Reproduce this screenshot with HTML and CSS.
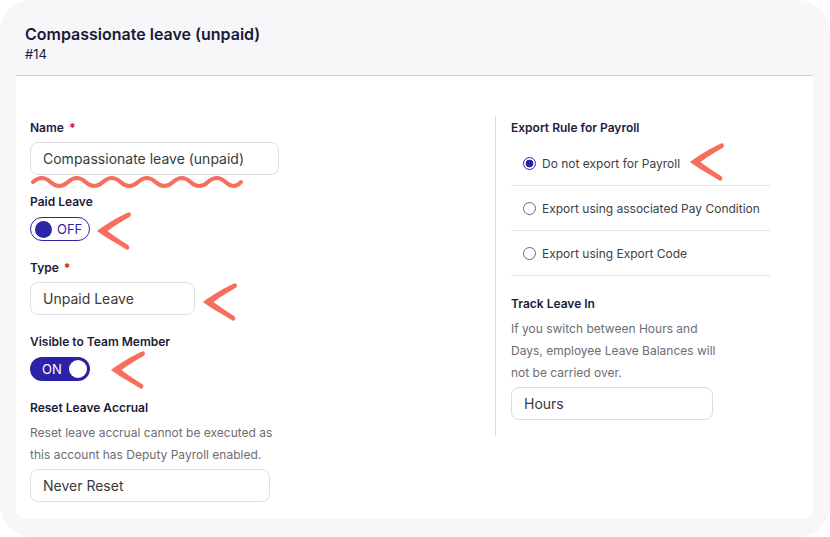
FILE: index.html
```html
<!DOCTYPE html>
<html>
<head>
<meta charset="utf-8">
<link rel="stylesheet" href="styles.css">
</head>
<body>
<div class="frame">
  <div class="header">
    <div class="title">Compassionate leave (unpaid)</div>
    <div class="subtitle">#14</div>
  </div>
  <div class="card">
    <div class="col-left">
      <div class="field">
        <div class="label">Name <span class="req">*</span></div>
        <div class="input w-name">Compassionate leave (unpaid)</div>
      </div>
      <div class="field">
        <div class="label tl">Paid Leave</div>
        <div class="toggle off"><span class="knob"></span><span class="ttext">OFF</span></div>
      </div>
      <div class="field">
        <div class="label">Type <span class="req">*</span></div>
        <div class="input w-type">Unpaid Leave</div>
      </div>
      <div class="field">
        <div class="label tl">Visible to Team Member</div>
        <div class="toggle on"><span class="ttext">ON</span><span class="knob"></span></div>
      </div>
      <div class="field">
        <div class="label">Reset Leave Accrual</div>
        <div class="desc">Reset leave accrual cannot be executed as<br>this account has Deputy Payroll enabled.</div>
        <div class="input w-reset">Never Reset</div>
      </div>
    </div>
    <div class="col-right">
      <div class="label">Export Rule for Payroll</div>
      <div class="radios">
        <div class="radio-row"><span class="radio checked"></span><span>Do not export for Payroll</span></div>
        <div class="radio-row"><span class="radio"></span><span>Export using associated Pay Condition</span></div>
        <div class="radio-row"><span class="radio"></span><span>Export using Export Code</span></div>
      </div>
      <div class="field track">
        <div class="label">Track Leave In</div>
        <div class="desc">If you switch between Hours and<br>Days, employee Leave Balances will<br>not be carried over.</div>
        <div class="input w-hours">Hours</div>
      </div>
    </div>

    <svg class="squiggle" width="214" height="16" viewBox="0 0 214 16"><path d="M2 8 Q10.75 0 19.5 8 T37 8 T54.5 8 T72 8 T89.5 8 T107 8 T124.5 8 T142 8 T159.5 8 T177 8 T194.5 8 T210 8" fill="none" stroke="#f76d5e" stroke-width="4" stroke-linecap="round"/></svg>
    <svg class="arrow a1" width="35" height="40" viewBox="0 0 35 40"><path d="M32 1.5 C24 5 10 13 1 20 C10 27 22 33 30.5 38.5 C33 39.5 34.5 36 32 34 C24 29 17 24 11.5 20 C18 15 26 10 33.5 6 C36 4.5 35 0.5 32 1.5 Z" fill="#f76d5e"/></svg>
    <svg class="arrow a2" width="35" height="40" viewBox="0 0 35 40"><path d="M32 1.5 C24 5 10 13 1 20 C10 27 22 33 30.5 38.5 C33 39.5 34.5 36 32 34 C24 29 17 24 11.5 20 C18 15 26 10 33.5 6 C36 4.5 35 0.5 32 1.5 Z" fill="#f76d5e"/></svg>
    <svg class="arrow a3" width="35" height="40" viewBox="0 0 35 40"><path d="M32 1.5 C24 5 10 13 1 20 C10 27 22 33 30.5 38.5 C33 39.5 34.5 36 32 34 C24 29 17 24 11.5 20 C18 15 26 10 33.5 6 C36 4.5 35 0.5 32 1.5 Z" fill="#f76d5e"/></svg>
    <svg class="arrow a4" width="35" height="40" viewBox="0 0 35 40"><path d="M32 1.5 C24 5 10 13 1 20 C10 27 22 33 30.5 38.5 C33 39.5 34.5 36 32 34 C24 29 17 24 11.5 20 C18 15 26 10 33.5 6 C36 4.5 35 0.5 32 1.5 Z" fill="#f76d5e"/></svg>
  </div>
</div>
</body>
</html>
```

FILE: styles.css
```css
* { box-sizing: border-box; }
html, body { margin: 0; padding: 0; background: #ffffff; }
body { font-family: Inter, "Noto Sans", sans-serif; color: #1c1b3b; }

.frame {
  width: 830px;
  height: 537px;
  background: #f7f7f9;
  border-radius: 32px;
  padding: 0 17px 0 16px;
}

.header {
  height: 76px;
  padding: 24px 9px 0;
  border-bottom: 1px solid #cfcfcf;
}
.title {
  font-size: 16px;
  line-height: 20px;
  font-weight: 600;
  color: #1a1936;
}
.subtitle {
  font-size: 13px;
  line-height: 16px;
  margin-top: 2px;
  color: #1a1936;
}

.card {
  position: relative;
  background: #ffffff;
  border-radius: 0 0 9px 9px;
  display: grid;
  grid-template-columns: 465px 275px;
  align-items: start;
  padding: 40px 14px 17px;
}

.col-left { padding-top: 3px; }
.col-right {
  border-left: 1px solid #dcdcdc;
  padding: 3px 0 16px 15px;
}

.field + .field { margin-top: 18px; }

.label {
  height: 16px;
  font-size: 12px;
  line-height: 17px;
  font-weight: 600;
  color: #1c1b3b;
  margin-bottom: 7px;
}
.label.tl { margin-bottom: 8px; }
.req {
  color: #c4161c;
  font-weight: 700;
  font-size: 12px;
  line-height: 0;
  margin-left: 2px;
}

.input {
  height: 33px;
  border: 1px solid #dedede;
  border-radius: 8px;
  padding: 0 12px;
  display: flex;
  align-items: center;
  font-size: 14px;
  color: #3a3a3a;
  background: #fff;
}
.w-name { width: 249px; }
.w-type { width: 165px; }
.w-reset { width: 240px; }
.w-hours { width: 202px; }

.desc {
  font-size: 12px;
  line-height: 22px;
  color: #6d6d72;
  margin-bottom: 3px;
}

.toggle {
  width: 60px;
  height: 24px;
  border-radius: 12px;
  display: flex;
  align-items: center;
  font-size: 13px;
}
.toggle.off {
  border: 1px solid #2c25a8;
  color: #2c25a8;
  padding-left: 4px;
  gap: 5px;
}
.toggle.off .knob {
  width: 17px; height: 17px; border-radius: 50%;
  background: #2c25a8;
}
.toggle.on {
  background: #2c22a8;
  color: #fff;
  padding: 0 3px 0 12px;
  justify-content: space-between;
}
.toggle.on .knob {
  width: 18px; height: 18px; border-radius: 50%;
  background: #fff;
}

.radios { width: 259px; margin-top: -1px; }
.radio-row {
  height: 45px;
  border-bottom: 1px solid #e3e3e3;
  display: flex;
  align-items: center;
  padding-left: 12px;
  gap: 6px;
  font-size: 12px;
  color: #404045;
}
.radio {
  width: 13px; height: 13px; border-radius: 50%;
  border: 1px solid #6a6a6a;
  flex: none;
}
.radio.checked {
  border: 1.5px solid #2c25a8;
  background: radial-gradient(circle, #2c25a8 0 3.6px, #fff 4.2px);
}

.field.track { margin-top: 19px; }

.squiggle { position: absolute; left: 15px; top: 98px; }
.arrow { position: absolute; }
.a1 { left: 80px; top: 135px; }
.a2 { left: 186px; top: 206px; }
.a3 { left: 94px; top: 274px; }
.a4 { left: 673px; top: 66px; }
```
